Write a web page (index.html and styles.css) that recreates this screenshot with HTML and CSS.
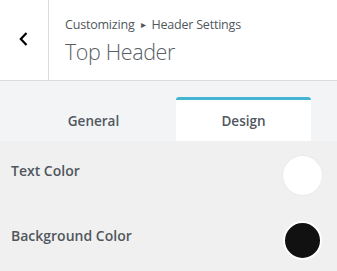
FILE: index.html
```html
<html>
	<head>
		<title>Customizing - Top Header</title>
		<link rel="stylesheet" href="styles.css">
	</head>
	<body>
		<div class="panel">

			<div class="panel-head">
				<button class="back" aria-label="Back">
					<svg width="10" height="16" viewBox="0 0 10 16">
						<path d="M7.5 2 L1.8 8 L7.5 14" fill="none" stroke="#000" stroke-width="2.2"/>
					</svg>
				</button>
				<div class="titles">
					<span class="crumbs">Customizing <span class="sep">&#9656;</span> Header Settings</span>
					<h2 class="title">Top Header</h2>
				</div>
			</div> <!-- end .panel-head -->

			<div class="tabs">
				<div class="tab">General</div>
				<div class="tab active">Design</div>
			</div>

			<ul class="controls">
				<li class="control">
					<span class="label">Text Color</span>
					<span class="swatch white"></span>
				</li>
				<li class="control">
					<span class="label">Background Color</span>
					<span class="swatch black"></span>
				</li>
			</ul>

		</div> <!-- end .panel -->
	</body>
</html>
```
FILE: styles.css
```css
html, body {
	margin: 0;
	height: 100%;
	overflow: hidden;
}

body {
	background: #f0f0f0;
	font-family: "Open Sans", "Noto Sans", sans-serif;
	color: #50575e;
}

.panel-head {
	display: flex;
	height: 80px;
	background: #fff;
	border-bottom: 1px solid #dcdcde;
}

.back {
	width: 49px;
	border: 0;
	border-right: 1px solid #dcdcde;
	background: #fff;
	display: flex;
	align-items: center;
	justify-content: center;
	padding: 0 0 2px 0;
}

.titles {
	padding: 15px 0 0 16px;
}

.crumbs {
	display: block;
	font-size: 12.5px;
	letter-spacing: -0.2px;
	line-height: 20px;
}

.crumbs .sep {
	font-size: 10px;
	margin: 0 3px;
	position: relative;
	top: -1px;
}

.title {
	margin: 3px 0 0 0;
	font-size: 21.5px;
	font-weight: 300;
	line-height: 28px;
	letter-spacing: -0.4px;
	color: #5a5f66;
}

.tabs {
	display: flex;
	gap: 15px;
	padding: 16px 26px 0 26px;
	background: #f3f4f5;
}

.tab {
	flex: 1;
	height: 41px;
	border-top: 3px solid transparent;
	border-radius: 3px 3px 0 0;
	text-align: center;
	font-size: 13.5px;
	font-weight: 600;
	line-height: 42px;
	color: #50575e;
}

.tab.active {
	background: #fff;
	border-top-color: #43b4d2;
}

.controls {
	list-style-type: none;
	margin: 0;
	padding: 4px 15px 0 11px;
}

.control {
	display: flex;
	justify-content: space-between;
	align-items: center;
	height: 60px;
	margin-bottom: 5px;
}

.label {
	font-size: 14px;
	font-weight: 600;
	margin-top: -10px;
}

.swatch {
	width: 39px;
	height: 39px;
	border-radius: 50%;
	box-sizing: border-box;
}

.swatch.white {
	background: #fff;
	box-shadow: 0 0 2px rgba(0,0,0,0.08);
}

.swatch.black {
	background: #111;
	border: 2px solid #fff;
}
```
